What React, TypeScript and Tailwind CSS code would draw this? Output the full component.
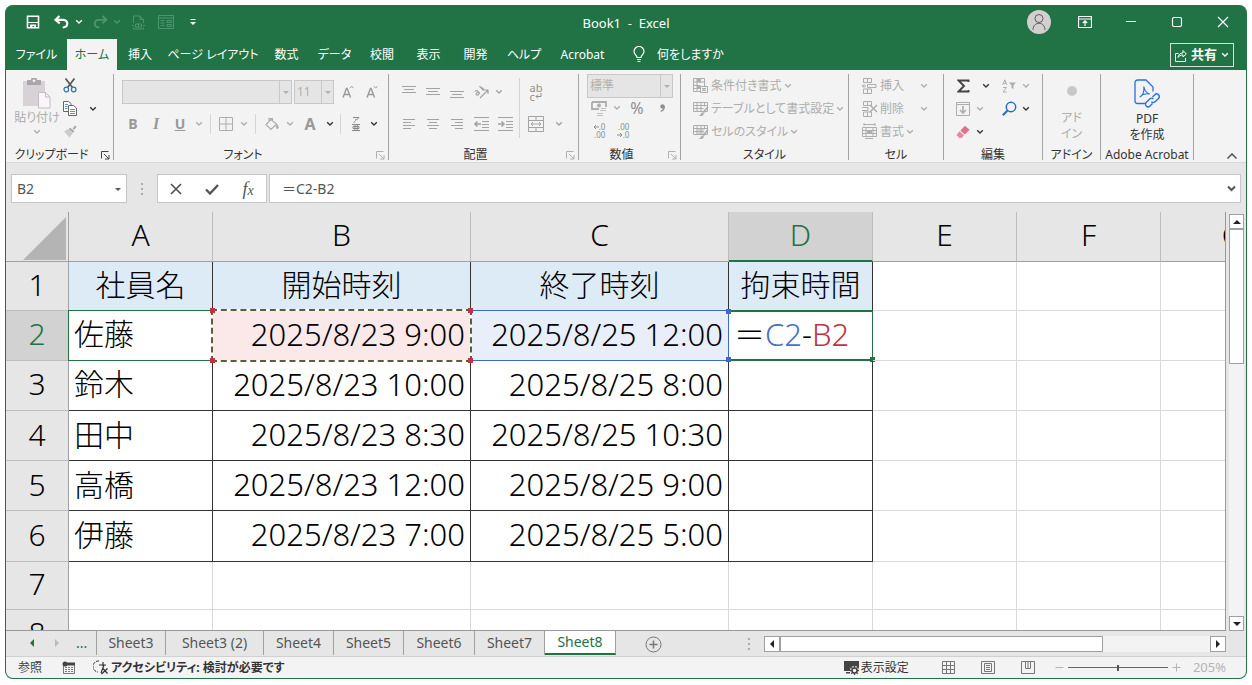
import { useState } from "react";
import type { ReactNode } from "react";
import clsx from "clsx";

interface RibbonTab {
  label: string;
  width: string;
}

const TABS: RibbonTab[] = [
  { label: "ファイル", width: "w-[61px]" },
  { label: "ホーム", width: "w-[50px]" },
  { label: "挿入", width: "w-[46px]" },
  { label: "ページ レイアウト", width: "w-[100px]" },
  { label: "数式", width: "w-[47px]" },
  { label: "データ", width: "w-[49px]" },
  { label: "校閲", width: "w-[46px]" },
  { label: "表示", width: "w-[47px]" },
  { label: "開発", width: "w-[47px]" },
  { label: "ヘルプ", width: "w-[50px]" },
  { label: "Acrobat", width: "w-[67px]" },
];

const COLUMNS = [
  { name: "A", width: "w-[144px]" },
  { name: "B", width: "w-[258px]" },
  { name: "C", width: "w-[258px]" },
  { name: "D", width: "w-[144px]" },
  { name: "E", width: "w-[144px]" },
  { name: "F", width: "w-[144px]" },
  { name: "G", width: "w-[144px]" },
];

const ROWS: string[][] = [
  ["社員名", "開始時刻", "終了時刻", "拘束時間"],
  ["佐藤", "2025/8/23 9:00", "2025/8/25 12:00", ""],
  ["鈴木", "2025/8/23 10:00", "2025/8/25 8:00", ""],
  ["田中", "2025/8/23 8:30", "2025/8/25 10:30", ""],
  ["高橋", "2025/8/23 12:00", "2025/8/25 9:00", ""],
  ["伊藤", "2025/8/23 7:00", "2025/8/25 5:00", ""],
  [],
  [],
];

const SHEETS = [
  { name: "Sheet3", width: "w-[70px]" },
  { name: "Sheet3 (2)", width: "w-[98px]" },
  { name: "Sheet4", width: "w-[70px]" },
  { name: "Sheet5", width: "w-[70px]" },
  { name: "Sheet6", width: "w-[71px]" },
  { name: "Sheet7", width: "w-[70px]" },
  { name: "Sheet8", width: "w-[71px]" },
];

/* ---------- icons ---------- */

interface IconProps {
  w?: number;
  h?: number;
  className?: string;
  children: ReactNode;
}

function Icon({ w = 16, h = 16, className, children }: IconProps) {
  return (
    <svg
      width={w}
      height={h}
      viewBox={`0 0 ${w} ${h}`}
      fill="none"
      stroke="currentColor"
      aria-hidden="true"
      className={clsx("shrink-0", className)}
    >
      {children}
    </svg>
  );
}

function Chevron({ className }: { className?: string }) {
  return (
    <Icon w={8} h={6} className={className}>
      <path d="M1.2 1.2 4 4l2.8-2.8" strokeWidth="1.3" />
    </Icon>
  );
}

function Triangle({ className, d }: { className?: string; d: string }) {
  return (
    <Icon w={8} h={8} className={className}>
      <path d={d} fill="currentColor" stroke="none" />
    </Icon>
  );
}

const DOWN = "M0 2h8L4 6z";
const UP = "M0 6h8L4 2z";
const LEFT = "M6 0v8L2 4z";
const RIGHT = "M2 0v8l4-4z";
const SMALL_DOWN = "M1 3h6L4 6z";

function SaveIcon() {
  return (
    <Icon w={14} h={14}>
      <path d="M1.5 1.2h11v11.6h-11z" strokeWidth="1.6" />
      <path d="M2 7h10v1H2zM4 9.5h6V13H8V11H6.500v2H4z" fill="currentColor" stroke="none" />
    </Icon>
  );
}

function UndoIcon({ flip }: { flip?: boolean }) {
  return (
    <Icon w={15} h={14} className={flip ? "-scale-x-100" : undefined}>
      <path d="M5.500 1 1.500 4.800l4.200 3.600M2 4.800h7.200c5.500 0 5.500 7.500-.5 7.700" strokeWidth={flip ? 1.800 : 2.200} />
    </Icon>
  );
}

function PrintDocIcon() {
  return (
    <Icon w={13} h={15}>
      <path d="M1.500 8V1h6.500l3.500 3.500V8M8 1v3.500h3.500M1.500 12.500V14h10v-1.500" />
      <path d="M0 10.500h2M11 10.500h2M3.500 9h6v3h-6zM6.500 9v3" />
    </Icon>
  );
}

function FormIcon() {
  return (
    <Icon w={16} h={14}>
      <path d="M.5.5h15v13H.5zM.5 3h15M2.500 5.500h4M2.500 8h4M2.500 10.500h4M9 5.500h4.500v2H9zM9 9.500h4.500v2H9z" />
    </Icon>
  );
}

function AvatarIcon() {
  return (
    <span className="flex size-6 items-center justify-center rounded-full bg-[#d2d0ce] text-[#605e5c]">
      <Icon w={16} h={18}>
        <circle cx="8" cy="5.500" r="4" />
        <path d="M2 17c0-9 12-9 12 0" />
      </Icon>
    </span>
  );
}

function BulbIcon() {
  return (
    <Icon w={12} h={17}>
      <path d="M4 11.500C4 9 1 8.500 1 5.500a5 5 0 0 1 10 0c0 3-3 3.500-3 6zM4 13.500h4M4.500 15.500h3" strokeWidth="1.200" />
    </Icon>
  );
}

function ShareIcon() {
  return (
    <Icon w={12} h={13}>
      <path d="M3.500 4.500h-3v8h10V9M3 8.500c.5-3 2-4.500 5-4.500V1.500L11.300 5 8 8V6c-2.500 0-4 .8-5 2.500z" />
    </Icon>
  );
}

function PasteIcon() {
  return (
    <Icon w={28} h={31}>
      <path d="M0 3h22v25H0z" fill="#d6d2d6" stroke="none" />
      <path d="M4 2h4a3 3 0 0 1 6 0h4v5H4z" fill="#a9a7a9" stroke="none" />
      <circle cx="11" cy="2.800" r="1.400" fill="#f3f3f3" stroke="none" />
      <path d="M15.500 14.500h7l4.500 4.500v11h-11.500zM22.500 14.500V19H27" fill="#faf5fa" stroke="#c3bdc3" />
    </Icon>
  );
}

function ScissorsIcon() {
  return (
    <Icon w={14} h={15}>
      <path d="m2.500.5 7 9M11.500.5l-7 9" stroke="#555" strokeWidth="1.700" />
      <circle cx="3.300" cy="11.500" r="2.300" stroke="#2f75b5" strokeWidth="1.200" />
      <circle cx="10.700" cy="11.500" r="2.300" stroke="#2f75b5" strokeWidth="1.200" />
    </Icon>
  );
}

function CopyIcon() {
  return (
    <Icon w={14} h={15} className="text-[#666]">
      <path d="M.5.5h5l2.500 2v8H.5z" fill="#fff" />
      <path d="M5.500 4.500h5l3 2.500v7.500h-8z" fill="#fff" />
      <path d="M2 3.500h3M2 5.500h2.500M2 7.500h2.500M7 8.500h5M7 10.500h5M7 12.500h5" stroke="#5b93c8" />
    </Icon>
  );
}

function BrushIcon() {
  return (
    <Icon w={14} h={13}>
      <path d="M1 6.500 5 4l5 4-3.500 4.500z" fill="#ccc" stroke="none" />
      <path d="m5.500 4 1.800-1.300 4.200 3.500L10 7.800zM9.500 3.500l2.500-3 1.700 1.300-2.500 3z" fill="#aaa" stroke="none" />
    </Icon>
  );
}

function LauncherIcon({ className }: { className?: string }) {
  return (
    <Icon w={9} h={9} className={className}>
      <path d="M.5 7.500v-7h7M3 3l5 5M8 4v4H4" />
    </Icon>
  );
}

function FontSizeIcon({ up }: { up?: boolean }) {
  return (
    <Icon w={12} h={14} className="text-[#9a9a9a]">
      <path d="M1 12.500 4.500 3.500h.6l3.500 9M2.300 9.500h5" strokeWidth="1.400" />
      <path d={up ? "M8 3.200 9.700 1.200l1.700 2" : "M8 1.200l1.700 2 1.700-2"} />
    </Icon>
  );
}

function BordersIcon() {
  return (
    <Icon w={14} h={14}>
      <path d="M.5.5h13v13H.5zM7 .5v13M.5 7h13" />
    </Icon>
  );
}

function BucketIcon() {
  return (
    <Icon w={14} h={14}>
      <path d="M6 2.500 1 7.500l5 5 5.500-5.500zM4 5V1.500h3.500V5" strokeWidth="1.200" />
      <path d="M12 7.500c1.500 2 1.800 4 .3 4s-1-2-.3-4z" fill="currentColor" />
    </Icon>
  );
}

function PhoneticIcon() {
  return (
    <Icon w={10} h={16} className="text-[#8a8a8a]">
      <path d="M2 1.500h6L5.500 4M4.800 2.800C5 5 4 6 2.500 6.500M1 8.500h8M1 14.500h8M2 10.500h6v2H2zM4 8.500v6M6.300 8.500v6" />
    </Icon>
  );
}

function LinesIcon({ d }: { d: string }) {
  return (
    <Icon w={14} h={12}>
      <path d={d} />
    </Icon>
  );
}

function OrientationIcon() {
  return (
    <Icon w={15} h={14}>
      <path d="M6 13 13.500 5.500M10 5h4v4" strokeWidth="1.200" />
      <path d="M1 6.500c1-1.500 2.300-1 3 0l2 2.200M4.200 7C2 7.500 1.500 9.500 3 10s2-1 2-2.500M5.500 1l4 4.500M7 3.500c1.500-1.500 3.500.5 2 2" strokeWidth="1.200" />
    </Icon>
  );
}

function WrapIcon() {
  return (
    <span className="flex flex-col text-[11px] leading-[9px] text-[#8f8f8f]">
      <span>ab</span>
      <span className="flex items-center">
        c
        <Icon w={7} h={7}>
          <path d="M6 0v3.500H1M3 1.500l-2 2 2 2" />
        </Icon>
      </span>
    </span>
  );
}

function IndentIcon({ right }: { right?: boolean }) {
  return (
    <Icon w={15} h={14}>
      <path d="M0 .5h15M8 4.500h7M8 7.500h7M8 10.500h7M0 13.500h15" />
      <path d={right ? "M0 7h6M3.500 4.500 6 7 3.500 9.500" : "M7 7H1M3.500 4.500 1 7l2.500 2.500"} strokeWidth="1.600" />
    </Icon>
  );
}

function MergeIcon() {
  return (
    <Icon w={16} h={16}>
      <path d="M.5.5h15v15H.5zM.5 4.500h15M.5 11.500h15M8 .5v4M8 11.500v4M3 8h10M5 6 3 8l2 2M11 6l2 2-2 2" />
    </Icon>
  );
}

function MoneyIcon() {
  return (
    <Icon w={16} h={15}>
      <path d="M1 1h14v5M1 1v7h7" strokeWidth="1.800" />
      <circle cx="8" cy="4.500" r="1.600" fill="currentColor" />
      <path d="M10 7.500h5M9 9.500h6M6 12.500h6M6 14.500h6" strokeOpacity="0.7" />
    </Icon>
  );
}

function DecimalIcon({ more }: { more?: boolean }) {
  return (
    <span className="flex flex-col items-end text-[8px] leading-[8px] text-[#8f8f8f]">
      <span className="flex items-center">
        {more && (
          <Icon w={6} h={6}>
            <path d="M6 3H1M3 1 1 3l2 2" />
          </Icon>
        )}
        {more ? ".0" : ".00"}
      </span>
      <span className="flex items-center">
        {!more && (
          <Icon w={6} h={6}>
            <path d="M0 3h5M3 1l2 2-2 2" />
          </Icon>
        )}
        {more ? ".00" : ".0"}
      </span>
    </span>
  );
}

function ConditionalIcon() {
  return (
    <Icon w={16} h={16}>
      <path d="M.5.5h11v13H.5zM4 .5v13M.5 4h11M.5 7.500h7M.5 10.500h7" />
      <path d="M4.500 1h3v3h-3zM4.500 7.500h2v3h-2z" fill="currentColor" />
      <path d="M7.500 8.500h7v6h-7z" fill="#f3f3f3" />
      <path d="M9 12.800 13 10M9 10.500h4M9 12.500h4" />
    </Icon>
  );
}

function TableStyleIcon({ filled }: { filled?: boolean }) {
  return (
    <Icon w={16} h={16}>
      {filled && <path d="M4 4h7v6H4z" fill="#d8d4d8" stroke="none" />}
      <path d="M.5 1.500h14v9H.5zM.5 4.500h14M.5 7.500h10M4 1.500v9M8 1.500v9M11.500 1.500v4" />
      <path d="m14.500 5-5 6 1.500 1.300 4.500-6z" fill="currentColor" stroke="none" />
      <path d="M5 15c3 0 2.500-3.500 4.500-3.500S11 15 8.500 15z" fill="currentColor" stroke="none" />
    </Icon>
  );
}

function InsertCellsIcon() {
  return (
    <Icon w={16} h={16}>
      <path d="M1.500.5h8v4h-8zM5.500.5v4M1.500 11h8v4.500h-8zM5.500 11v4.500M5.500 6.500H14v3H5.500zM4 8H0M2.500 6 .5 8l2 2" />
    </Icon>
  );
}

function DeleteCellsIcon() {
  return (
    <Icon w={16} h={16}>
      <path d="M1.500.5h8v4h-8zM5.500.5v4M1.500 11h8v4.500h-8zM5.500 11v4.500M0 6.500h6v3H0" />
      <path d="m8 4 7 7M15 4l-7 7" strokeWidth="1.500" />
    </Icon>
  );
}

function FormatCellsIcon() {
  return (
    <Icon w={16} h={17}>
      <path d="M2 1.500h11M2 0v3M13 0v3" />
      <path d="M.5 4.500h14v9H.5zM4 4.500v9M11 4.500v9M.5 7.500h14M.5 10.500h14M3 15.500h8" />
      <path d="M5.500 7.500h4v3h-4z" fill="currentColor" />
    </Icon>
  );
}

function SigmaIcon() {
  return (
    <Icon w={13} h={14} className="text-[#444]">
      <path d="M11.500 3V1.500H1.500L7 7l-5.500 5.500h10V11" strokeWidth="1.900" />
    </Icon>
  );
}

function SortIcon() {
  return (
    <Icon w={14} h={14}>
      <path d="M.8 6 2.800.8 4.800 6M1.500 4.300h2.600M1 8.500h3.500L1 13h3.800" />
      <path d="M7 3.500h7L11.500 6.500V10l-2-1V6.500z" fill="currentColor" stroke="none" />
    </Icon>
  );
}

function FillIcon() {
  return (
    <Icon w={14} h={14}>
      <path d="M.5.5h13v13H.5zM.5 2.500h13" />
      <path d="M7 4v7M4 8l3 3 3-3" strokeWidth="1.600" />
    </Icon>
  );
}

function SearchIcon() {
  return (
    <Icon w={15} h={15} className="text-[#2b6cb8]">
      <circle cx="9" cy="6" r="4.700" strokeWidth="1.500" />
      <path d="M5.500 9.500.8 14.200" strokeWidth="2" />
    </Icon>
  );
}

function EraserIcon() {
  return (
    <Icon w={14} h={14}>
      <path d="M9 .8 13.600 4.800 8.800 9.600 4.300 5.500z" fill="#e2708a" stroke="none" />
      <path d="m3.500 6.300 4.500 4.100-2.500 2.600H3.400L.4 9.900z" fill="#e8899e" stroke="none" />
    </Icon>
  );
}

function PdfIcon() {
  return (
    <Icon w={26} h={30} className="text-[#2b6fe0]">
      <path d="M11 24.500H3.500a2.500 2.500 0 0 1-2.500-2.500V3.500A2.500 2.500 0 0 1 3.500 1H12l7 7v4.500" strokeWidth="1.300" />
      <path d="M9.800 7.500c1 5 3 7 6 7.500-4-.8-7.500.3-10 3 3-1.500 4.500-6 4-10.500z" strokeWidth="1.100" />
      <path
        d="m18.500 18 2.300-2.300a2.600 2.600 0 0 1 3.700 3.700L21 22.800a2.600 2.600 0 0 1-3.700 0M18.500 24.500 16 27a2.600 2.600 0 0 1-3.700-3.700l3.400-3.400a2.600 2.600 0 0 1 3.700 0"
        strokeWidth="1.400"
      />
    </Icon>
  );
}

function MacroIcon() {
  return (
    <Icon w={13} h={13}>
      <path d="M1.500 4v8.500h11V4" strokeOpacity="0.7" />
      <path d="M3 6.500h8M3 8.500h8M3 10.500h8" strokeDasharray="2 1" strokeOpacity="0.7" />
      <circle cx="3" cy="3" r="2.500" fill="currentColor" stroke="none" />
      <path d="M5 1.500h8v3H5z" fill="currentColor" stroke="none" />
    </Icon>
  );
}

function AccessibilityIcon() {
  return (
    <Icon w={16} h={15}>
      <path d="M6 1a5.500 5.500 0 0 0-1 11" strokeDasharray="3 1" />
      <path d="M6 5h7M10 2v4M11 5l-3 8M9.500 8l5 5.500M14.500 8.500l-6 5.500" strokeWidth="1.200" />
    </Icon>
  );
}

function DisplaySettingsIcon() {
  return (
    <Icon w={16} h={15}>
      <path d="M0 1h15v8H6v2H0zM2 12h4v1.500H2z" fill="#444" stroke="none" />
      <circle cx="10.500" cy="10.500" r="4.500" fill="#f3f3f3" stroke="none" />
      <circle cx="10.500" cy="10.500" r="2.500" stroke="#444" strokeWidth="1.500" />
      <path
        d="M10.500 6v2M10.500 13v2M6 10.500h2M13 10.500h2M7.300 7.300l1.400 1.400M12.300 12.300l1.400 1.400M7.300 13.700l1.400-1.400M12.300 8.700l1.400-1.400"
        stroke="#444"
        strokeWidth="1.300"
      />
    </Icon>
  );
}

/* ---------- title bar and tabs ---------- */

function TitleBar() {
  const windowButton = "flex h-full w-[46px] items-center justify-center";
  return (
    <header className="flex h-[34px] items-center text-white">
      <div className="flex flex-1 items-center">
        <button type="button" aria-label="上書き保存" className="ml-[13px] flex w-7 justify-center">
          <SaveIcon />
        </button>
        <button type="button" aria-label="元に戻す" className="flex w-7 justify-center">
          <UndoIcon />
        </button>
        <Chevron />
        <button type="button" aria-label="やり直し" className="ml-1 flex w-[26px] justify-center text-[#4f9470]">
          <UndoIcon flip />
        </button>
        <Chevron className="text-[#4f9470]" />
        <button type="button" aria-label="印刷プレビュー" className="ml-1 flex w-[26px] justify-center text-[#4f9470]">
          <PrintDocIcon />
        </button>
        <button type="button" aria-label="フォーム" className="flex w-[30px] justify-center text-[#4f9470]">
          <FormIcon />
        </button>
        <button type="button" aria-label="クイック アクセス ツール バーのユーザー設定" className="ml-2">
          <Icon w={8} h={8}>
            <path d="M1.500 1.500h5" />
            <path d="M1 4h6L4 7z" fill="currentColor" stroke="none" />
          </Icon>
        </button>
      </div>
      <h1 className="pt-1 text-[13px] whitespace-pre">Book1  -  Excel</h1>
      <div className="flex h-full flex-1 items-center justify-end">
        <button type="button" aria-label="アカウント" className={windowButton}>
          <AvatarIcon />
        </button>
        <button type="button" aria-label="リボンの表示オプション" className={windowButton}>
          <Icon w={14} h={12}>
            <path d="M.5.5h13v11H.5zM.5 3h13M7 10V5M4.800 7 7 4.800 9.200 7" strokeWidth="1.200" />
          </Icon>
        </button>
        <button type="button" aria-label="最小化" className={windowButton}>
          <Icon w={12} h={12}>
            <path d="M1 5.500h10" strokeWidth="1.200" />
          </Icon>
        </button>
        <button type="button" aria-label="最大化" className={windowButton}>
          <Icon w={12} h={12}>
            <rect x="1.500" y="1.500" width="9" height="9" rx="1.500" strokeWidth="1.200" />
          </Icon>
        </button>
        <button type="button" aria-label="閉じる" className={windowButton}>
          <Icon w={12} h={12}>
            <path d="m1 1 10 10M11 1 1 11" strokeWidth="1.200" />
          </Icon>
        </button>
      </div>
    </header>
  );
}

function TabBar() {
  const [active, setActive] = useState("ホーム");
  return (
    <nav className="flex h-[31px] text-xs whitespace-nowrap text-white">
      {TABS.map((tab) => (
        <button
          key={tab.label}
          type="button"
          onClick={() => setActive(tab.label)}
          className={clsx("shrink-0", tab.width, active === tab.label && "bg-[#f3f3f3] text-[#217346]")}
        >
          {tab.label}
        </button>
      ))}
      <button type="button" className="ml-[17px] flex items-center gap-3">
        <BulbIcon />
        何をしますか
      </button>
      <button
        type="button"
        className="mt-1 mr-3 mb-[3px] ml-auto flex items-center gap-1 border border-white/80 px-1 text-[13px] font-bold"
      >
        <ShareIcon />
        共有
        <Chevron />
      </button>
    </nav>
  );
}

/* ---------- ribbon ---------- */

interface GroupProps {
  label: string;
  width: string;
  launcher?: "on" | "off";
  children: ReactNode;
}

function Group({ label, width, launcher, children }: GroupProps) {
  return (
    <section className={clsx("flex shrink-0 flex-col border-r border-[#a3a3a3]", width)}>
      <div className="h-[75px] shrink-0">{children}</div>
      <div className="flex h-3 shrink-0 items-center text-[#333]">
        <h2 className="flex-1 text-center text-xs leading-3 whitespace-nowrap">{label}</h2>
        {launcher && (
          <button type="button" aria-label={`${label}の設定`} className="flex w-4 justify-center">
            <LauncherIcon className={launcher === "on" ? "text-[#444]" : "text-[#b0b0b0]"} />
          </button>
        )}
      </div>
    </section>
  );
}

interface ToolProps {
  label: string;
  width: string;
  className?: string;
  children: ReactNode;
}

function Tool({ label, width, className, children }: ToolProps) {
  return (
    <button
      type="button"
      aria-label={label}
      className={clsx("flex h-5 shrink-0 items-center justify-center", width, className)}
    >
      {children}
    </button>
  );
}

function Divider({ className }: { className?: string }) {
  return <div className={clsx("w-px shrink-0 bg-[#d4d4d4]", className)} />;
}

interface ComboProps {
  label: string;
  value: string;
  width: string;
  arrow: string;
}

function Combo({ label, value, width, arrow }: ComboProps) {
  return (
    <div className={clsx("flex h-6 shrink-0 border border-[#c8c8c8] bg-[#e5e5e5] text-[#b0b0b0]", width)}>
      <select aria-label={label} className="min-w-0 flex-1 appearance-none pl-[2px] text-xs">
        <option>{value}</option>
      </select>
      <span className={clsx("flex items-center justify-center border-l border-[#c8c8c8]", arrow)}>
        <Triangle d={SMALL_DOWN} />
      </span>
    </div>
  );
}

function MenuRow({ icon, label, wide }: { icon: ReactNode; label: string; wide?: boolean }) {
  return (
    <button type="button" className="flex h-[23px] items-center whitespace-nowrap">
      {icon}
      <span className="ml-[2px]">{label}</span>
      <Chevron className={wide ? "ml-4" : "ml-[2px]"} />
    </button>
  );
}

function Ribbon() {
  return (
    <div className="flex h-[93px] border-b border-[#d8d8d8] bg-[#f3f3f3] pt-1 text-[#adadad]">
      <div className="flex h-[86px] flex-1">
        <Group label="クリップボード" width="w-[108px]" launcher="on">
          <div className="flex pl-2">
            <button type="button" className="flex w-[46px] flex-col items-center pt-1 text-xs leading-[18px] whitespace-nowrap">
              <PasteIcon />
              貼り付け
              <Chevron className="mt-[2px]" />
            </button>
            <div className="flex w-5 flex-col">
              <Tool label="切り取り" width="w-5" className="h-[23px]">
                <ScissorsIcon />
              </Tool>
              <Tool label="コピー" width="w-5" className="h-[23px]">
                <CopyIcon />
              </Tool>
              <Tool label="書式のコピー" width="w-5" className="h-[23px]">
                <BrushIcon />
              </Tool>
            </div>
            <button type="button" aria-label="コピーのオプション" className="ml-[9px] h-[69px]">
              <Chevron className="text-[#333]" />
            </button>
          </div>
        </Group>

        <Group label="フォント" width="w-[275px]" launcher="off">
          <div className="flex items-center gap-[2px] pt-[6px] pl-2">
            <Combo label="フォント名" value="" width="w-[170px]" arrow="w-3" />
            <Combo label="フォント サイズ" value="11" width="w-10" arrow="w-3" />
            <Tool label="フォント サイズの拡大" width="w-6">
              <FontSizeIcon up />
            </Tool>
            <Tool label="フォント サイズの縮小" width="w-5">
              <FontSizeIcon />
            </Tool>
          </div>
          <div className="flex items-center pt-[10px] pl-2 text-[#999]">
            <Tool label="太字" width="w-[22px]" className="text-sm font-bold">
              B
            </Tool>
            <Tool label="斜体" width="w-6" className="font-['Liberation_Serif',serif] text-base font-bold italic">
              I
            </Tool>
            <Tool label="下線" width="w-6" className="text-sm font-bold underline">
              U
            </Tool>
            <Tool label="下線の種類" width="w-[14px]">
              <Chevron className="text-[#adadad]" />
            </Tool>
            <Divider className="mx-1 h-5" />
            <Tool label="罫線" width="w-[22px]" className="text-[#adadad]">
              <BordersIcon />
            </Tool>
            <Tool label="罫線の種類" width="w-[14px]" className="text-[#adadad]">
              <Chevron />
            </Tool>
            <Divider className="mx-1 h-5" />
            <Tool label="塗りつぶしの色" width="w-6" className="text-[#adadad]">
              <BucketIcon />
            </Tool>
            <Tool label="塗りつぶしの色の種類" width="w-3" className="text-[#adadad]">
              <Chevron />
            </Tool>
            <Tool label="フォントの色" width="w-7" className="text-base font-bold">
              A
            </Tool>
            <Tool label="フォントの色の種類" width="w-3">
              <Chevron className="text-[#333]" />
            </Tool>
            <Divider className="mx-1 h-5" />
            <Tool label="ふりがな" width="w-[22px]">
              <PhoneticIcon />
            </Tool>
            <Tool label="ふりがなの種類" width="w-[14px]">
              <Chevron className="text-[#333]" />
            </Tool>
          </div>
        </Group>

        <Group label="配置" width="w-[190px]" launcher="off">
          <div className="flex pl-2 text-[#a3a3a3]">
            <div className="flex w-[122px] flex-col gap-3 pt-2">
              <div className="flex">
                <Tool label="上揃え" width="w-6">
                  <LinesIcon d="M0 .5h14M2 3.500h10M0 6.500h14" />
                </Tool>
                <Tool label="上下中央揃え" width="w-6">
                  <LinesIcon d="M0 2.500h14M2 5.500h10M0 8.500h14" />
                </Tool>
                <Tool label="下揃え" width="w-6">
                  <LinesIcon d="M0 5.500h14M2 8.500h10M0 11.500h14" />
                </Tool>
                <Tool label="方向" width="w-6">
                  <OrientationIcon />
                </Tool>
                <Tool label="方向の種類" width="w-3">
                  <Chevron />
                </Tool>
              </div>
              <div className="flex">
                <Tool label="左揃え" width="w-6">
                  <LinesIcon d="M1 1.500h12M1 4.500h8M1 7.500h12M1 10.500h8" />
                </Tool>
                <Tool label="中央揃え" width="w-6">
                  <LinesIcon d="M1 1.500h12M3 4.500h8M1 7.500h12M3 10.500h8" />
                </Tool>
                <Tool label="右揃え" width="w-6">
                  <LinesIcon d="M1 1.500h12M5 4.500h8M1 7.500h12M5 10.500h8" />
                </Tool>
                <Tool label="インデントを減らす" width="w-6">
                  <IndentIcon />
                </Tool>
                <Tool label="インデントを増やす" width="w-6">
                  <IndentIcon right />
                </Tool>
              </div>
            </div>
            <Divider className="mt-1 h-[60px]" />
            <div className="flex flex-col gap-3 pt-2">
              <Tool label="折り返して全体を表示する" width="w-8">
                <WrapIcon />
              </Tool>
              <div className="flex">
                <Tool label="セルを結合して中央揃え" width="w-8">
                  <MergeIcon />
                </Tool>
                <Tool label="結合の種類" width="w-[14px]">
                  <Chevron />
                </Tool>
              </div>
            </div>
          </div>
        </Group>

        <Group label="数値" width="w-[102px]" launcher="off">
          <div className="flex flex-col pl-2">
            <Combo label="表示形式" value="標準" width="w-[86px]" arrow="w-3" />
            <div className="flex h-5 items-center">
              <Tool label="通貨表示形式" width="w-6">
                <MoneyIcon />
              </Tool>
              <Tool label="通貨の種類" width="w-3">
                <Chevron />
              </Tool>
              <Tool label="パーセント スタイル" width="w-7" className="text-base text-[#8f8f8f]">
                %
              </Tool>
              <Tool label="桁区切りスタイル" width="w-[22px]" className="text-[#8f8f8f]">
                <Icon w={5} h={8}>
                  <path d="M4.300 2.500C4.500 5 3 6.500.8 7.500" strokeWidth="1.200" />
                  <circle cx="2.500" cy="2.500" r="2.200" fill="currentColor" stroke="none" />
                </Icon>
              </Tool>
            </div>
            <div className="flex h-[26px] items-center">
              <Tool label="小数点以下の表示桁数を増やす" width="w-6">
                <DecimalIcon more />
              </Tool>
              <Tool label="小数点以下の表示桁数を減らす" width="w-6">
                <DecimalIcon />
              </Tool>
            </div>
          </div>
        </Group>

        <Group label="スタイル" width="w-[168px]">
          <div className="flex flex-col items-start pl-3 text-xs">
            <MenuRow icon={<ConditionalIcon />} label="条件付き書式" />
            <MenuRow icon={<TableStyleIcon />} label="テーブルとして書式設定" />
            <MenuRow icon={<TableStyleIcon filled />} label="セルのスタイル" />
          </div>
        </Group>

        <Group label="セル" width="w-[95px]">
          <div className="flex flex-col items-start pl-[13px] text-xs">
            <MenuRow icon={<InsertCellsIcon />} label="挿入" wide />
            <MenuRow icon={<DeleteCellsIcon />} label="削除" wide />
            <MenuRow icon={<FormatCellsIcon />} label="書式" />
          </div>
        </Group>

        <Group label="編集" width="w-[99px]">
          <div className="flex flex-col pl-2">
            <div className="flex h-[23px] items-center">
              <Tool label="オート SUM" width="w-[22px]">
                <SigmaIcon />
              </Tool>
              <Tool label="オート SUM の種類" width="w-6">
                <Chevron className="text-[#333]" />
              </Tool>
              <Tool label="並べ替えとフィルター" width="w-[22px]">
                <SortIcon />
              </Tool>
              <Tool label="並べ替えの種類" width="w-3">
                <Chevron />
              </Tool>
            </div>
            <div className="flex h-[23px] items-center">
              <Tool label="フィル" width="w-[22px]">
                <FillIcon />
              </Tool>
              <Tool label="フィルの種類" width="w-3">
                <Chevron />
              </Tool>
              <Tool label="検索と選択" width="w-[34px]" className="pl-3">
                <SearchIcon />
              </Tool>
              <Tool label="検索の種類" width="w-3">
                <Chevron className="text-[#333]" />
              </Tool>
            </div>
            <div className="flex h-[23px] items-center">
              <Tool label="クリア" width="w-[22px]">
                <EraserIcon />
              </Tool>
              <Tool label="クリアの種類" width="w-3">
                <Chevron className="text-[#333]" />
              </Tool>
            </div>
          </div>
        </Group>

        <Group label="アドイン" width="w-[58px]">
          <button type="button" className="flex w-full flex-col items-center pt-3 text-xs leading-4">
            <span className="mb-[14px] size-[10px] rounded-full bg-[#c8c8c8]" />
            アド
            <br />
            イン
          </button>
        </Group>

        <Group label="Adobe Acrobat" width="w-[93px]">
          <button type="button" className="flex w-full flex-col items-center pt-[5px] text-xs leading-4 text-[#333]">
            <PdfIcon />
            <span className="mt-[2px]">PDF</span>
            <span>を作成</span>
          </button>
        </Group>

        <button type="button" aria-label="リボンを折りたたむ" className="mt-auto mr-2 ml-auto text-[#444]">
          <Icon w={12} h={8}>
            <path d="m1.500 6.500 4.500-4.500 4.500 4.500" strokeWidth="1.300" />
          </Icon>
        </button>
      </div>
    </div>
  );
}

function FormulaBar() {
  const [formula, setFormula] = useState("＝C2-B2");
  const box = "flex h-[29px] items-center border border-[#c6c6c6] bg-white";
  return (
    <div className="flex h-[49px] items-start bg-[#e6e6e6] pt-[11px] pr-[5px] pl-[5px] text-[#555]">
      <div className={clsx(box, "w-[116px] pr-1")}>
        <input aria-label="名前ボックス" defaultValue="B2" className="w-full min-w-0 pl-[5px] text-sm outline-none" />
        <Triangle d={SMALL_DOWN} />
      </div>
      <div className="flex h-[29px] w-[30px] flex-col items-center justify-center gap-[3px]">
        <span className="size-[2px] bg-[#aaa]" />
        <span className="size-[2px] bg-[#aaa]" />
        <span className="size-[2px] bg-[#aaa]" />
      </div>
      <div className={clsx(box, "w-[110px]")}>
        <Tool label="キャンセル" width="w-9">
          <Icon w={12} h={12}>
            <path d="m1 1 10 10M11 1 1 11" strokeWidth="1.700" />
          </Icon>
        </Tool>
        <Tool label="入力" width="w-9">
          <Icon w={14} h={12}>
            <path d="m1 6.500 4 4L13 2" strokeWidth="2.400" />
          </Icon>
        </Tool>
        <Tool label="関数の挿入" width="w-9" className="font-['Liberation_Serif',serif] text-lg italic">
          f<span className="pt-1 text-sm">x</span>
        </Tool>
      </div>
      <div className={clsx(box, "ml-[2px] flex-1 pr-1")}>
        <input
          aria-label="数式バー"
          value={formula}
          onChange={(e) => setFormula(e.target.value)}
          className="min-w-0 flex-1 pl-3 text-sm outline-none"
        />
        <Icon w={9} h={7}>
          <path d="M1 1.500 4.500 5 8 1.500" strokeWidth="2" />
        </Icon>
      </div>
    </div>
  );
}

/* ---------- worksheet ---------- */

function Handle({ className }: { className: string }) {
  return <span className={clsx("absolute size-[5px]", className)} />;
}

function MarchingAnts() {
  return (
    <span className="pointer-events-none absolute -inset-[2px] z-20 border-2 border-white">
      <span className="absolute -inset-[2px] border-2 border-dashed border-[#56603a]" />
      <Handle className="-top-[3px] -left-[3px] bg-[#c0343f]" />
      <Handle className="-top-[3px] -right-[3px] bg-[#c0343f]" />
      <Handle className="-bottom-[3px] -left-[3px] bg-[#c0343f]" />
      <Handle className="-right-[3px] -bottom-[3px] bg-[#c0343f]" />
    </span>
  );
}

function RangeOutline() {
  return (
    <span className="pointer-events-none absolute -inset-px z-10 border border-[#3a6cc6]">
      <Handle className="-top-[2px] -right-[3px] bg-[#3a6cc6]" />
      <Handle className="-right-[3px] -bottom-[2px] bg-[#3a6cc6]" />
    </span>
  );
}

function Cell({ row, col }: { row: number; col: number }) {
  const text = ROWS[row][col] ?? "";
  const inTable = row < 6 && col < 4;
  const editing = row === 1 && col === 3;
  return (
    <td
      className={clsx(
        "relative border-r border-b p-0 px-[5px] pb-[2px] whitespace-nowrap",
        inTable ? "border-[#333]" : "border-[#d9d9d9]",
        row === 0 && inTable && "bg-[#ddebf7] text-center",
        row > 0 && col === 0 && "text-left",
        row > 0 && (col === 1 || col === 2) && "text-right text-[31px]",
        row > 0 && col === 3 && "text-left text-[31px]",
        row === 1 && col === 1 && "bg-[#fbe9e9]",
        row === 1 && col === 2 && "bg-[#e8effa]",
      )}
    >
      {editing ? (
        <>
          ＝<span className="text-[#4472c4]">C2</span>-<span className="text-[#c0343f]">B2</span>
        </>
      ) : (
        text
      )}
      {row === 1 && col === 0 && (
        <span className="pointer-events-none absolute -inset-px border border-[#217346]" />
      )}
      {row === 1 && col === 1 && <MarchingAnts />}
      {row === 1 && col === 2 && <RangeOutline />}
      {editing && (
        <span className="pointer-events-none absolute -inset-px border border-y-2 border-[#217346]">
          <Handle className="-right-[3px] -bottom-[3px] bg-[#217346]" />
        </span>
      )}
    </td>
  );
}

function Worksheet() {
  return (
    <div className="min-w-0 flex-1 overflow-hidden border-r border-b border-[#999] bg-white">
      <table className="h-[447px] w-[1299px] table-fixed border-separate border-spacing-0 text-[30px] leading-none font-light text-black">
        <thead>
          <tr className="h-[50px] bg-[#e6e6e6]">
            <th className="w-[63px] border-r border-b border-[#a0a0a0] p-0">
              <Icon w={43} h={43} className="mt-1 ml-[17px]">
                <path d="M43 0v43H0z" fill="#b4b4b4" stroke="none" />
              </Icon>
            </th>
            {COLUMNS.map((col) => (
              <th
                key={col.name}
                scope="col"
                className={clsx(
                  "border-r border-b border-r-[#bdbdbd] p-0 pb-[3px] font-light",
                  col.width,
                  col.name === "D" ? "border-b-2 border-b-[#217346] bg-[#d2d2d2] text-[#217346]" : "border-b-[#a0a0a0]",
                )}
              >
                {col.name}
              </th>
            ))}
          </tr>
        </thead>
        <tbody>
          {ROWS.map((_, row) => (
            <tr key={row}>
              <th
                scope="row"
                className={clsx(
                  "border-r border-b border-r-[#a0a0a0] border-b-[#bdbdbd] p-0 pb-[2px] font-light",
                  row === 1 ? "bg-[#d2d2d2] text-[#217346]" : "bg-[#e6e6e6]",
                )}
              >
                {row + 1}
              </th>
              {COLUMNS.map((col, i) => (
                <Cell key={col.name} row={row} col={i} />
              ))}
            </tr>
          ))}
        </tbody>
      </table>
    </div>
  );
}

function VerticalScrollbar() {
  const arrow = "flex size-[15px] items-center justify-center border border-[#a0a0a0] bg-white text-[#222]";
  return (
    <div className="flex w-5 flex-col bg-[#e6e6e6] pt-[2px] pl-[3px]">
      <button type="button" aria-label="上へスクロール" className={arrow}>
        <Triangle d={UP} />
      </button>
      <div className="flex w-[15px] flex-1 flex-col bg-[#f3f3f3]">
        <div className="h-[135px] border border-[#a0a0a0] bg-white" />
      </div>
      <button type="button" aria-label="下へスクロール" className={arrow}>
        <Triangle d={DOWN} />
      </button>
    </div>
  );
}

function SheetBar() {
  const [active, setActive] = useState("Sheet8");
  const arrow = "flex size-4 items-center justify-center border border-[#a0a0a0] bg-white text-[#222]";
  return (
    <div className="flex h-[25px] items-start bg-[#e6e6e6] text-sm text-[#555]">
      <div className="flex h-6 w-[90px] items-center">
        <button type="button" aria-label="前のシート" className="ml-[22px] text-[#217346]">
          <Triangle d={LEFT} />
        </button>
        <button type="button" aria-label="次のシート" className="ml-[17px] text-[#bbb]">
          <Triangle d={RIGHT} />
        </button>
        <span className="ml-[15px] text-[#217346]">...</span>
      </div>
      {SHEETS.map((sheet, i) => (
        <button
          key={sheet.name}
          type="button"
          onClick={() => setActive(sheet.name)}
          className={clsx(
            "flex h-6 shrink-0 items-center justify-center whitespace-nowrap",
            sheet.width,
            i === 0 && "border-l border-l-[#a0a0a0]",
            active === sheet.name
              ? "border-r border-b-2 border-r-[#a0a0a0] border-b-[#217346] bg-white text-[#217346]"
              : "border-r border-r-[#a0a0a0]",
          )}
        >
          {sheet.name}
        </button>
      ))}
      <button type="button" aria-label="新しいシート" className="mt-[5px] ml-[29px] text-[#777]">
        <Icon w={17} h={17}>
          <circle cx="8.500" cy="8.500" r="7.500" />
          <path d="M8.500 4.500v8M4.500 8.500h8" strokeWidth="1.500" />
        </Icon>
      </button>
      <div className="mt-[7px] ml-auto flex h-3 flex-col justify-between">
        <span className="size-[2px] bg-[#aaa]" />
        <span className="size-[2px] bg-[#aaa]" />
        <span className="size-[2px] bg-[#aaa]" />
      </div>
      <div className="mt-[5px] mr-5 ml-[14px] flex w-[462px] bg-[#f3f3f3]">
        <button type="button" aria-label="左へスクロール" className={arrow}>
          <Triangle d={LEFT} />
        </button>
        <div className="flex h-4 flex-1">
          <div className="h-4 w-3/4 border border-[#a0a0a0] bg-white" />
        </div>
        <button type="button" aria-label="右へスクロール" className={arrow}>
          <Triangle d={RIGHT} />
        </button>
      </div>
    </div>
  );
}

function StatusBar() {
  const [zoom, setZoom] = useState(50);
  return (
    <footer className="flex h-[22px] items-center border-t border-[#d0d0d0] bg-[#f3f3f3] pr-5 pl-3 text-xs whitespace-nowrap text-[#444]">
      <span>参照</span>
      <button type="button" aria-label="マクロの記録" className="ml-5">
        <MacroIcon />
      </button>
      <button type="button" className="ml-[18px] flex items-center gap-[2px] font-bold text-[#333]">
        <AccessibilityIcon />
        アクセシビリティ: 検討が必要です
      </button>
      <button type="button" className="ml-auto flex items-center gap-px text-[#333]">
        <DisplaySettingsIcon />
        表示設定
      </button>
      <div className="ml-[33px] flex items-center gap-[26px] text-[#777]">
        <button type="button" aria-label="標準">
          <Icon w={13} h={13}>
            <path d="M.5.5h12v12H.5zM.5 4.500h12M.5 8.500h12M4.500.5v12M8.500.5v12" />
          </Icon>
        </button>
        <button type="button" aria-label="ページ レイアウト">
          <Icon w={14} h={13}>
            <path d="M.5.5h13v12H.5zM3.500 2.500h7v8h-7zM5 4.500h4M5 6.500h4M5 8.500h4" />
          </Icon>
        </button>
        <button type="button" aria-label="改ページ プレビュー">
          <Icon w={14} h={13}>
            <path d="M.5.5h13v12H.5zM4.500.5v7h5v-7M7 .5v7" />
          </Icon>
        </button>
      </div>
      <div className="ml-5 flex items-center gap-1 text-[#b5b5b5]">
        <button type="button" aria-label="縮小">
          <Icon w={9} h={9}>
            <path d="M.5 4.500h8" />
          </Icon>
        </button>
        <input
          type="range"
          aria-label="ズーム"
          value={zoom}
          onChange={(e) => setZoom(Number(e.target.value))}
          className="h-px w-[100px] appearance-none bg-[#666] [&::-webkit-slider-thumb]:h-[6px] [&::-webkit-slider-thumb]:w-[2px] [&::-webkit-slider-thumb]:appearance-none [&::-webkit-slider-thumb]:bg-[#555]"
        />
        <button type="button" aria-label="拡大">
          <Icon w={9} h={9}>
            <path d="M.5 4.500h8M4.500.5v8" />
          </Icon>
        </button>
      </div>
      <span className="ml-3 text-[13px] text-[#b5b5b5]">205%</span>
    </footer>
  );
}

export default function App() {
  return (
    <div className="flex h-screen flex-col bg-white px-[5px] pt-[5px] pb-[6px] font-['Noto_Sans','Noto_Sans_CJK_JP',sans-serif] [font-feature-settings:'palt']">
      <div className="flex min-h-0 flex-1 flex-col overflow-hidden rounded-lg border border-t-0 border-[#217346] bg-[#217346]">
        <TitleBar />
        <TabBar />
        <Ribbon />
        <FormulaBar />
        <main className="flex min-h-0 flex-1 bg-[#e6e6e6] [font-feature-settings:normal]">
          <Worksheet />
          <VerticalScrollbar />
        </main>
        <SheetBar />
        <StatusBar />
      </div>
    </div>
  );
}
